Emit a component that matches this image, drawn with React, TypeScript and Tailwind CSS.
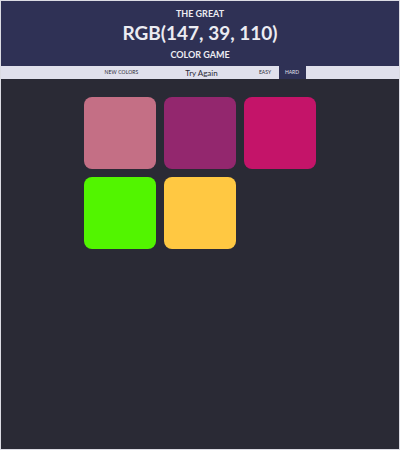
const colors = ["#c46f85", "#93276e", "#c41469", "#52f500", "#ffc842"];

export default function App() {
  return (
    <div
      className="flex h-[450px] w-[400px] flex-col border border-[#dcdce4] bg-[#2a2a35]"
      style={{ fontFamily: "Lato, 'Open Sans', sans-serif" }}
    >
      {/* Header */}
      <header className="flex h-[65px] flex-col items-center bg-[#2f3155] pt-[6px] text-[#ececf2]">
        <span className="text-[9px] font-bold leading-[14px]">THE GREAT</span>
        <h1 className="text-[19px] font-bold leading-[24px]">RGB(147, 39, 110)</h1>
        <span className="text-[9px] font-bold leading-[19px]">COLOR GAME</span>
      </header>

      {/* Controls */}
      <nav className="flex h-[13px] justify-center bg-[#e0e0ec] text-[#2a2a35]">
        <div className="flex w-[217px] items-stretch">
          <button className="w-[60px] text-[5px] uppercase leading-none tracking-wide">New Colors</button>
          <span className="flex w-[100px] items-center justify-center text-[8px] leading-none">Try Again</span>
          <button className="w-[27px] text-[5px] leading-none">EASY</button>
          <button className="w-[27px] bg-[#2f3155] text-[5px] leading-none text-[#e0e0ec]">HARD</button>
        </div>
      </nav>

      {/* Squares */}
      <main className="flex justify-center pt-[18px]">
        <div className="grid w-[232px] grid-cols-3 gap-[8px]">
          {colors.map((c) => (
            <div key={c} className="h-[72px] w-[72px] rounded-[8px]" style={{ backgroundColor: c }} />
          ))}
        </div>
      </main>
    </div>
  );
}
